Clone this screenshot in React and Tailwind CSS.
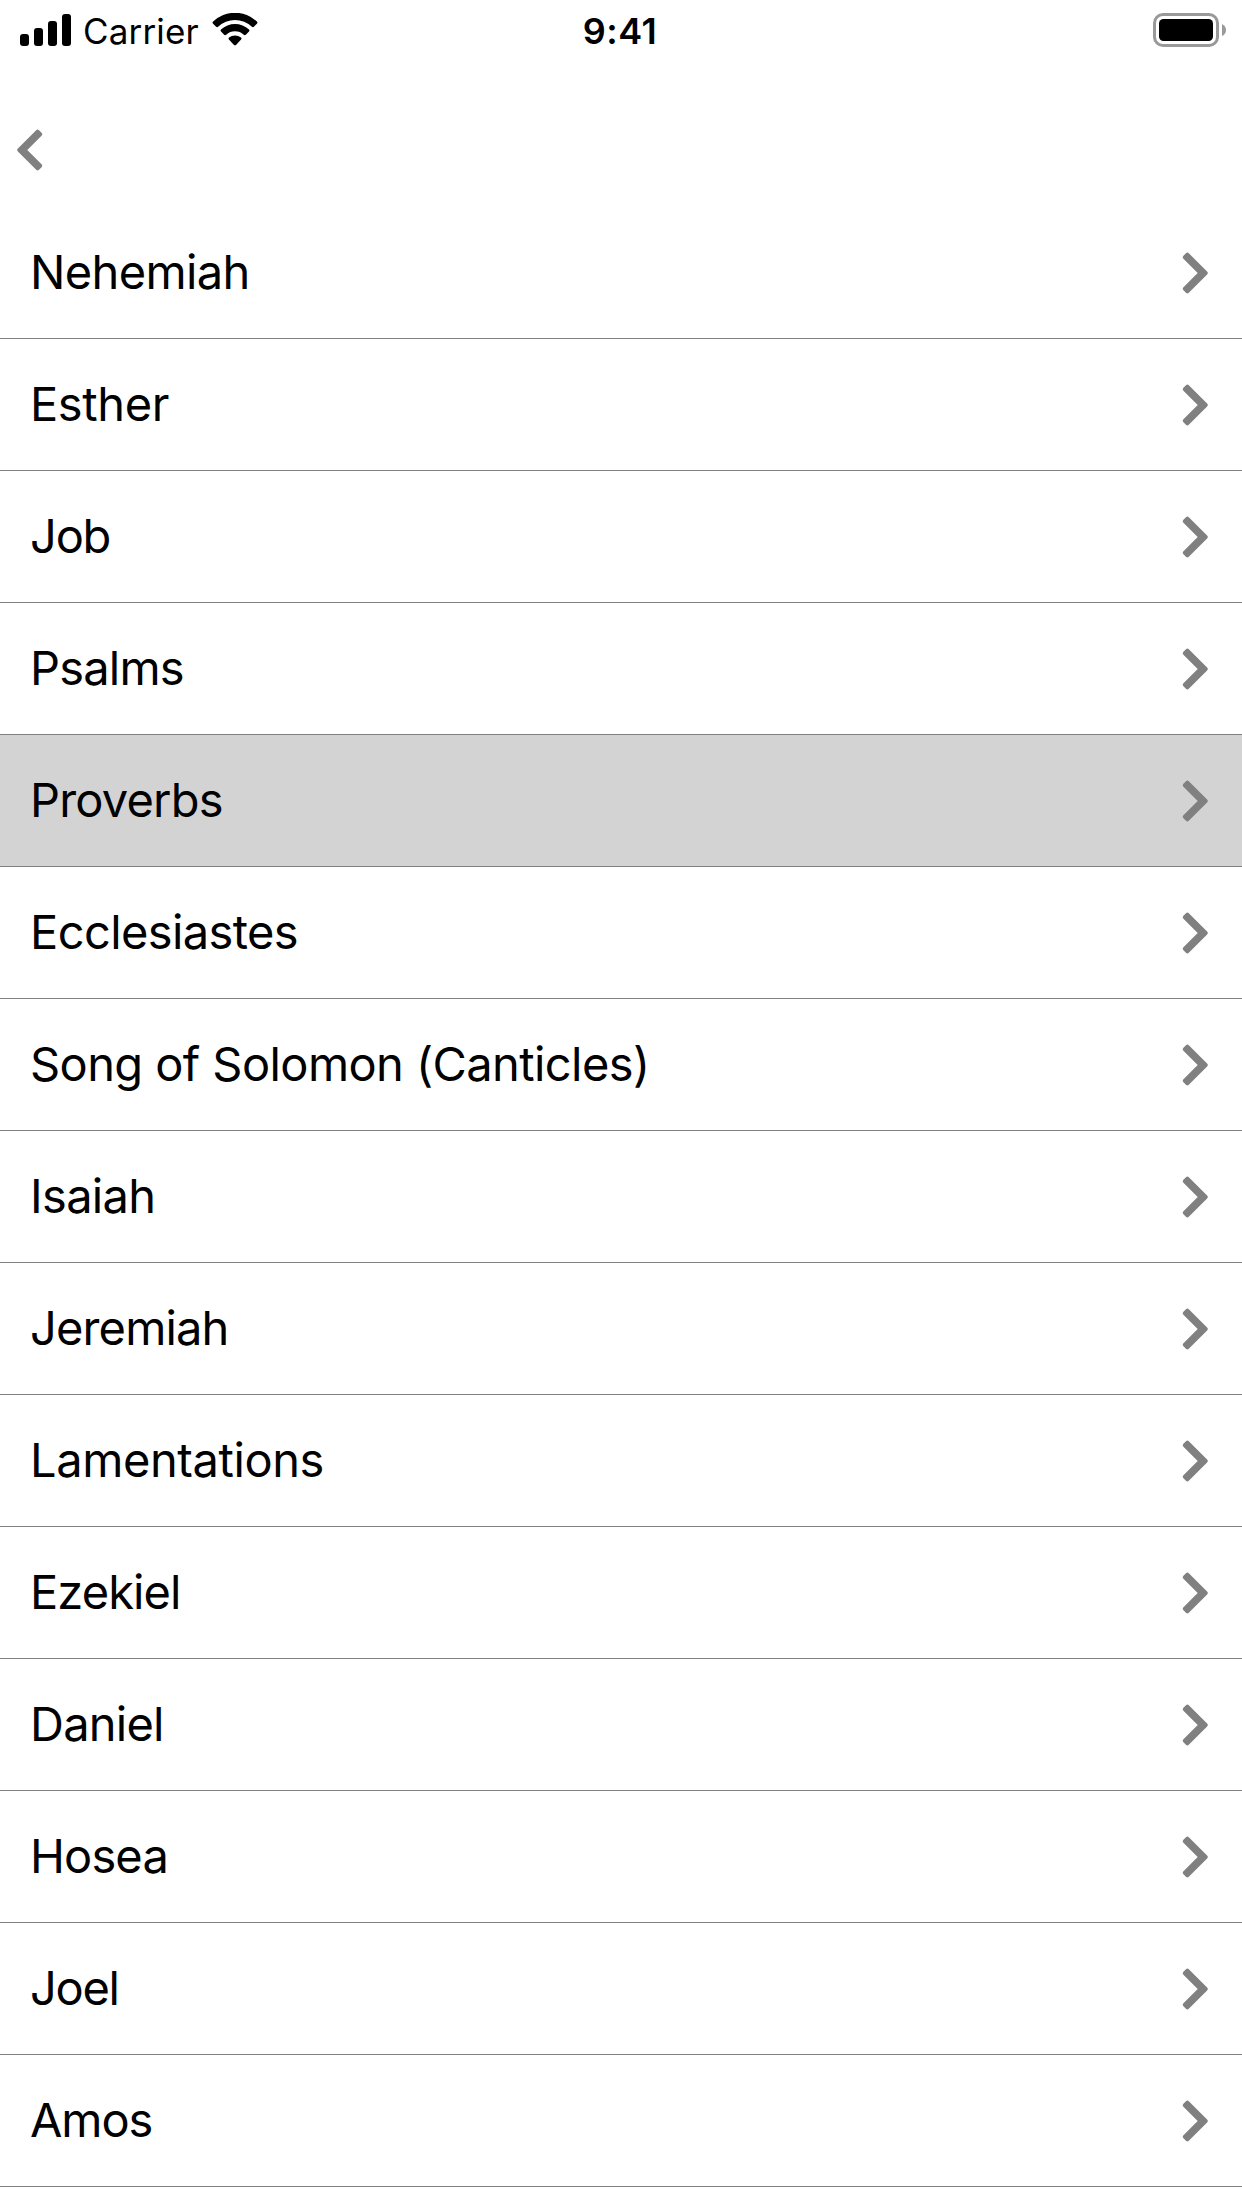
import React from "react";

const books = [
  ["Nehemiah", "tracking-[-0.62px]"],
  ["Esther", "tracking-[-0.4px]"],
  ["Job", "tracking-[-1.2px]"],
  ["Psalms", "tracking-[-0.8px]"],
  ["Proverbs", "tracking-[-0.8px]"],
  ["Ecclesiastes", "tracking-[-0.6px]"],
  ["Song of Solomon (Canticles)", "tracking-[-0.58px]"],
  ["Isaiah", "tracking-[-0.65px]"],
  ["Jeremiah", "tracking-[-0.85px]"],
  ["Lamentations", "tracking-[-0.4px]"],
  ["Ezekiel", "tracking-[-0.9px]"],
  ["Daniel", "tracking-[-0.75px]"],
  ["Hosea", "tracking-[-0.85px]"],
  ["Joel", "tracking-[-1.3px]"],
  ["Amos", "tracking-[-1.1px]"],
];

function Chevron({ className }) {
  return (
    <svg
      className={className}
      width="26"
      height="42"
      viewBox="0 0 26 42"
      fill="#808080"
      stroke="#808080"
      strokeWidth="4"
      strokeLinejoin="round"
    >
      <path d="M5.4 2.7L23.7 21L5.4 39.3L2.85 36.75L18.6 21L2.85 5.25Z" />
    </svg>
  );
}

function StatusBar() {
  return (
    <header className="grid h-[60px] grid-cols-3 items-start">
      <div className="flex items-start pl-5">
        <svg className="mt-[14px]" width="51" height="32" viewBox="0 0 51 32">
          <rect x="0" y="20" width="9" height="12" rx="3" />
          <rect x="14" y="14" width="9" height="18" rx="3" />
          <rect x="28" y="7" width="9" height="25" rx="3" />
          <rect x="42" y="0" width="9" height="32" rx="3" />
        </svg>
        <span className="ml-[12px] mt-[10px] w-[116px] whitespace-nowrap text-[35px] leading-[42px] tracking-[0.15px]">Carrier</span>
        <svg className="ml-[13px] mt-[13px]" width="46" height="33" viewBox="0 0 46 33">
          <path d="M1.1 10.7Q0 9.6 1.1 8.6A31.5 31.5 0 0 1 44.9 8.6Q46 9.6 44.9 10.7L41.9 13.7Q40.9 14.6 39.9 13.7A24.5 24.5 0 0 0 6.1 13.7Q5.1 14.6 4.1 13.7Z" />
          <path d="M9 18.6Q8 17.6 9 16.6A20.5 20.5 0 0 1 37 16.6Q38 17.6 37 18.6L33.8 21.7Q32.8 22.6 31.8 21.7A13 13 0 0 0 14.2 21.7Q13.2 22.6 12.2 21.7Z" />
          <path d="M16.9 26.5Q15.9 25.4 17 24.5A9.8 9.8 0 0 1 29 24.5Q30.1 25.4 29.1 26.5L24 31.9Q23 32.8 22 31.9Z" />
        </svg>
      </div>
      <time className="mt-[10px] pr-[2px] text-center text-[36px] font-semibold leading-[42px] tracking-[0.5px]">9:41</time>
      <svg className="ml-auto mr-[15px] mt-[12px]" width="74" height="36" viewBox="0 0 74 36">
        <rect x="1.5" y="2.5" width="63" height="31" rx="8.5" fill="none" stroke="#999" strokeWidth="3" />
        <rect x="6" y="7" width="54" height="22" rx="4.5" />
        <path d="M69 12Q73 14 73 18Q73 22 69 24Z" fill="#999" />
      </svg>
    </header>
  );
}

export default function App() {
  return (
    <div className="h-[2208px] w-[1242px] overflow-hidden bg-white font-['Inter',sans-serif] text-black">
      <StatusBar />
      <nav className="flex h-[147px] items-start pl-[17px] pt-[69px]">
        <button aria-label="Back">
          <Chevron className="rotate-180" />
        </button>
      </nav>
      <ul>
        {books.map(([name, tracking]) => (
          <li
            key={name}
            className={
              "flex h-[132px] items-center justify-between border-b border-[#808080] pl-[30px] pr-[34px] " +
              (name === "Proverbs" ? "bg-[#d3d3d3]" : "")
            }
          >
            <span className={"mb-[2px] whitespace-nowrap text-[47px] leading-[60px] " + tracking}>{name}</span>
            <Chevron />
          </li>
        ))}
      </ul>
    </div>
  );
}
